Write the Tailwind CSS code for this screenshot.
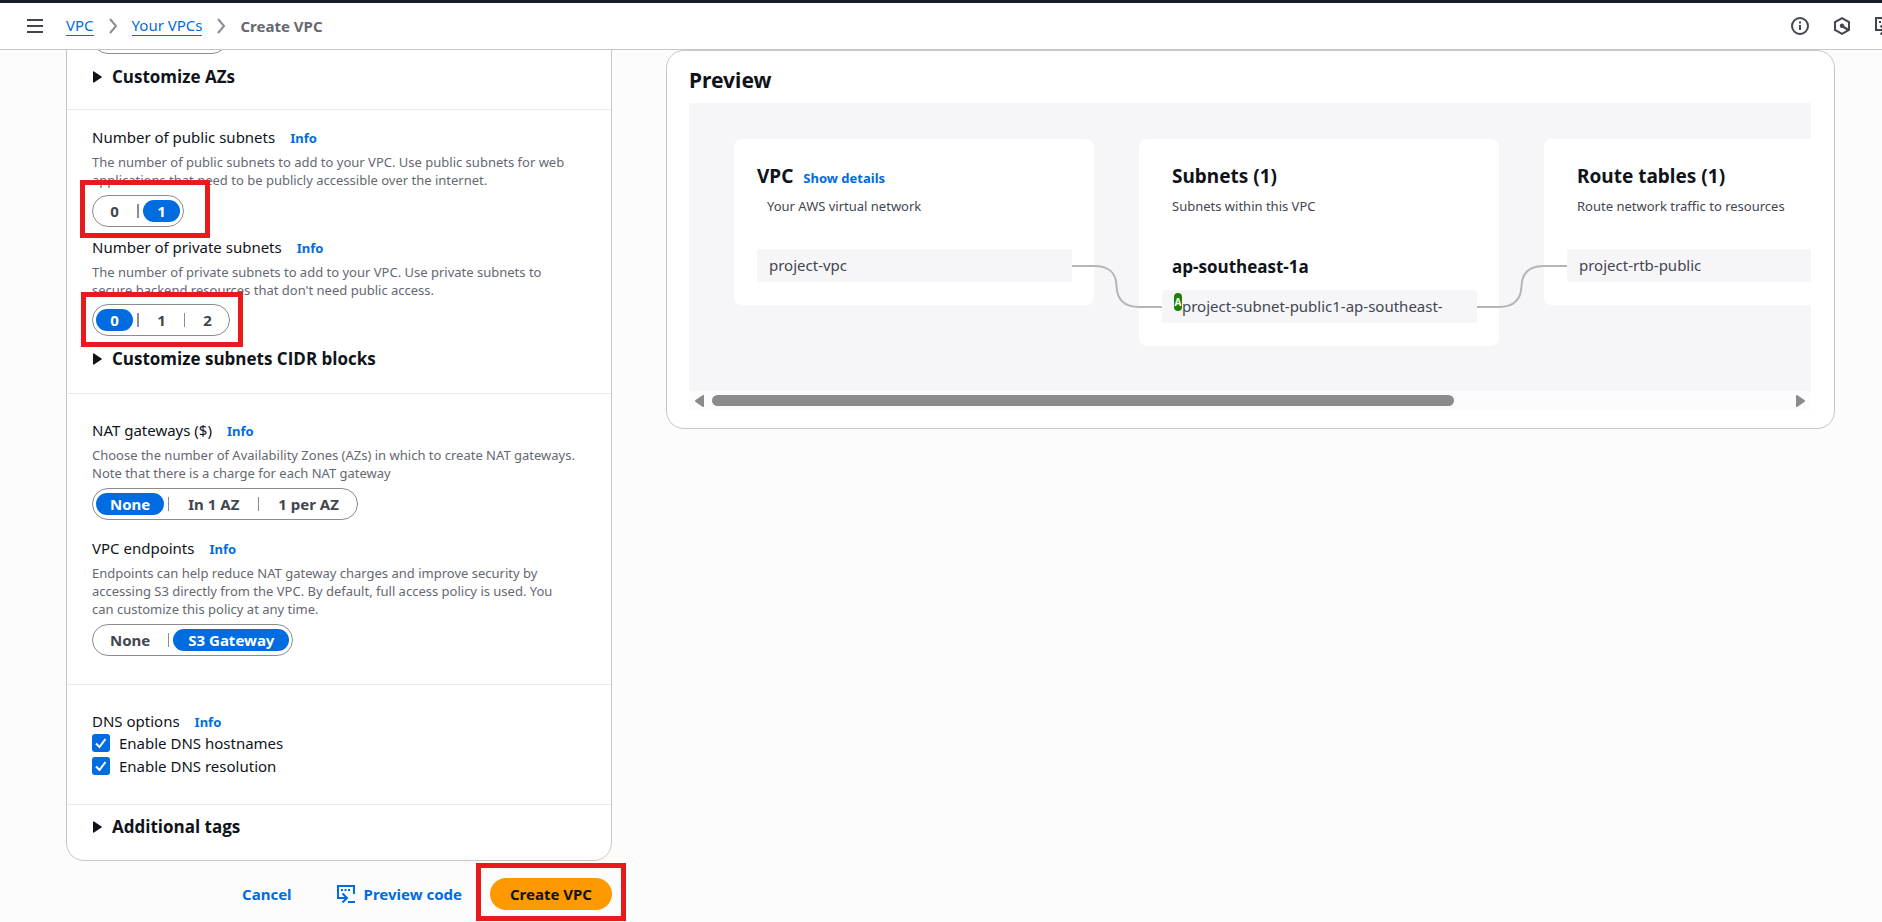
<!DOCTYPE html>
<html lang="en">
<head>
<meta charset="utf-8">
<title>Create VPC</title>
<script src="https://cdn.jsdelivr.net/npm/@tailwindcss/browser@4"></script>
</head>
<body class="flex h-screen flex-col overflow-hidden bg-[#fcfcfd] font-['Noto_Sans','Open_Sans',sans-serif] text-[15px] leading-5 text-[#0f141a]">

<header class="relative z-10 flex h-[50px] shrink-0 items-center overflow-hidden border-t-3 border-b border-t-[#161d26] border-b-[#c6c6cd] bg-white pb-px pl-[27px]">
  <button type="button" aria-label="Open navigation" class="text-[#424650]">
    <svg class="block size-4" viewBox="0 0 16 16" stroke="currentColor" stroke-width="2" fill="none"><path d="M0 2h16M0 8h16M0 14h16"/></svg>
  </button>
  <nav aria-label="Breadcrumbs" class="ml-[23px] flex items-center gap-[13px]">
    <a href="#" class="border-b border-[#006ce0] text-[#006ce0]">VPC</a>
    <svg class="h-4 w-3" viewBox="0 0 12 16" fill="none" stroke="#8c8c94" stroke-width="2"><path d="M3 1l6 7-6 7"/></svg>
    <a href="#" class="border-b border-[#006ce0] text-[#006ce0]">Your VPCs</a>
    <svg class="h-4 w-3" viewBox="0 0 12 16" fill="none" stroke="#8c8c94" stroke-width="2"><path d="M3 1l6 7-6 7"/></svg>
    <span class="font-bold text-[#656871]">Create VPC</span>
  </nav>
  <div class="-mr-[11px] ml-auto flex items-center gap-6 text-[#424650]">
    <button type="button" aria-label="Info"><svg class="block size-[18px]" viewBox="0 0 18 18" fill="none" stroke="currentColor" stroke-width="2"><circle cx="9" cy="9" r="8"/><path d="M9 8v5M9 4.500v2"/></svg></button>
    <button type="button" aria-label="Amazon Q"><svg class="block size-[18px]" viewBox="0 0 18 18" fill="none" stroke="currentColor" stroke-width="2"><path d="M9 1.200l7 3.900v7.800l-7 3.900-7-3.900V5.100z"/><path d="M9 9l6.500 4" stroke-width="2.400"/><circle cx="9" cy="8.800" r="2.200" fill="currentColor" stroke="none"/></svg></button>
    <button type="button" aria-label="CloudShell"><svg class="block size-[18px]" viewBox="0 0 18 18" fill="none" stroke="currentColor" stroke-width="2"><path d="M10 13H1V1h16v8"/><path d="M4 5h2M7.500 5h2M11 5h2M5.500 8.500L10 13l-4.500 4.500M11 17h7"/></svg></button>
  </div>
</header>

<main class="flex min-h-0 flex-1 items-start gap-[54px] overflow-hidden pr-[47px] pl-[66px]">

  <form class="-mt-10 w-[546px] shrink-0">
    <div class="rounded-[18px] border border-[#c6c6cd] bg-white">

      <section class="border-b border-[#ebebf0] px-[25px] pt-[11px] pb-[22px]">
        <div class="h-8 w-[136px] rounded-full border border-[#8c8c94]"></div>
        <button type="button" class="mt-[13px] flex h-5 items-center gap-[10px] font-['Open_Sans',sans-serif] text-[17px] font-bold">
          <svg class="ml-px h-3 w-[9px]" viewBox="0 0 9 12" fill="currentColor"><path d="M0 1q0-1 1-.5l7.500 5q.5.500 0 1l-7.500 5q-1 .5-1-.5z"/></svg>Customize AZs
        </button>
      </section>

      <section class="border-b border-[#ebebf0] px-[25px] pt-[17px] pb-6">
        <div class="flex items-baseline gap-[15px]"><h3 id="pub">Number of public subnets</h3><a href="#" class="text-[13px] font-bold text-[#006ce0]">Info</a></div>
        <p class="mt-[5px] text-[13px] leading-[18px] text-[#656871]">The number of public subnets to add to your VPC. Use public subnets for web<br>applications that need to be publicly accessible over the internet.</p>
        <div class="relative mt-[6px] w-fit">
          <div role="group" aria-labelledby="pub" class="flex h-8 items-center rounded-full border border-[#8c8c94] px-[3px] font-bold text-[#424650]">
            <button type="button" class="h-[22px] w-[37px]">0</button>
            <span class="mx-1 h-[14px] w-[2px] bg-[#8c8c94]"></span>
            <button type="button" class="h-[22px] w-[37px] rounded-full bg-[#006ce0] text-white">1</button>
          </div>
          <div class="absolute -top-[15px] -left-3 h-[58px] w-[130px] border-5 border-[#e81a1c]"></div>
        </div>

        <div class="mt-[10px] flex items-baseline gap-[15px]"><h3 id="priv">Number of private subnets</h3><a href="#" class="text-[13px] font-bold text-[#006ce0]">Info</a></div>
        <p class="mt-[5px] text-[13px] leading-[18px] text-[#656871]">The number of private subnets to add to your VPC. Use private subnets to<br>secure backend resources that don't need public access.</p>
        <div class="relative mt-[5px] w-fit">
          <div role="group" aria-labelledby="priv" class="flex h-8 items-center rounded-full border border-[#8c8c94] px-[3px] font-bold text-[#424650]">
            <button type="button" class="h-[22px] w-[37px] rounded-full bg-[#006ce0] text-white">0</button>
            <span class="mx-1 h-[14px] w-[2px] bg-[#8c8c94]"></span>
            <button type="button" class="h-[22px] w-[37px]">1</button>
            <span class="mx-1 h-[14px] w-px bg-[#8c8c94]"></span>
            <button type="button" class="h-[22px] w-[37px]">2</button>
          </div>
          <div class="absolute -top-3 -left-[11px] h-[55px] w-[162px] border-5 border-[#e81a1c]"></div>
        </div>
        <button type="button" class="mt-[13px] flex h-5 items-center gap-[10px] font-['Open_Sans',sans-serif] text-[17px] font-bold">
          <svg class="ml-px h-3 w-[9px]" viewBox="0 0 9 12" fill="currentColor"><path d="M0 1q0-1 1-.5l7.500 5q.5.500 0 1l-7.500 5q-1 .5-1-.5z"/></svg>Customize subnets CIDR blocks
        </button>
      </section>

      <section class="border-b border-[#ebebf0] px-[25px] pt-[26px] pb-7">
        <div class="flex items-baseline gap-[15px]"><h3 id="nat">NAT gateways ($)</h3><a href="#" class="text-[13px] font-bold text-[#006ce0]">Info</a></div>
        <p class="mt-[5px] text-[13px] leading-[18px] text-[#656871]">Choose the number of Availability Zones (AZs) in which to create NAT gateways.<br>Note that there is a charge for each NAT gateway</p>
        <div role="group" aria-labelledby="nat" class="mt-[6px] flex h-8 w-fit items-center rounded-full border border-[#8c8c94] px-[3px] font-bold text-[#424650]">
          <button type="button" class="h-[22px] rounded-full bg-[#006ce0] px-[14px] text-white">None</button>
          <span class="mx-1 h-[14px] w-px bg-[#8c8c94]"></span>
          <button type="button" class="h-[22px] px-[15px]">In 1 AZ</button>
          <span class="mx-1 h-[14px] w-px bg-[#8c8c94]"></span>
          <button type="button" class="h-[22px] px-[15px]">1 per AZ</button>
        </div>

        <div class="mt-[18px] flex items-baseline gap-[15px]"><h3 id="ep">VPC endpoints</h3><a href="#" class="text-[13px] font-bold text-[#006ce0]">Info</a></div>
        <p class="mt-[5px] text-[13px] leading-[18px] text-[#656871]">Endpoints can help reduce NAT gateway charges and improve security by<br>accessing S3 directly from the VPC. By default, full access policy is used. You<br>can customize this policy at any time.</p>
        <div role="group" aria-labelledby="ep" class="mt-[6px] flex h-8 w-fit items-center rounded-full border border-[#8c8c94] px-[3px] font-bold text-[#424650]">
          <button type="button" class="h-[22px] px-[14px]">None</button>
          <span class="mx-1 h-[14px] w-px bg-[#8c8c94]"></span>
          <button type="button" class="h-[22px] rounded-full bg-[#006ce0] px-[15px] text-white">S3 Gateway</button>
        </div>
      </section>

      <section class="border-b border-[#ebebf0] px-[25px] pt-[26px] pb-7">
        <div class="flex items-baseline gap-[15px]"><h3>DNS options</h3><a href="#" class="text-[13px] font-bold text-[#006ce0]">Info</a></div>
        <div class="mt-px flex flex-col gap-[3px]">
          <label class="flex h-5 items-center gap-[9px]"><span class="relative size-[18px]"><input type="checkbox" checked class="block size-[18px] appearance-none rounded-[3px] bg-[#006ce0]"><svg class="pointer-events-none absolute inset-0" viewBox="0 0 18 18" fill="none" stroke="#fff" stroke-width="2"><path d="M4 9.500l3.500 3.500L13.500 5"/></svg></span>Enable DNS hostnames</label>
          <label class="flex h-5 items-center gap-[9px]"><span class="relative size-[18px]"><input type="checkbox" checked class="block size-[18px] appearance-none rounded-[3px] bg-[#006ce0]"><svg class="pointer-events-none absolute inset-0" viewBox="0 0 18 18" fill="none" stroke="#fff" stroke-width="2"><path d="M4 9.500l3.500 3.500L13.500 5"/></svg></span>Enable DNS resolution</label>
        </div>
      </section>

      <section class="px-[25px] pt-3 pb-[23px]">
        <button type="button" class="flex h-5 items-center gap-[10px] font-['Open_Sans',sans-serif] text-[17px] font-bold">
          <svg class="ml-px h-3 w-[9px]" viewBox="0 0 9 12" fill="currentColor"><path d="M0 1q0-1 1-.5l7.500 5q.5.500 0 1l-7.500 5q-1 .5-1-.5z"/></svg>Additional tags
        </button>
      </section>
    </div>

    <div class="mt-[17px] flex items-center justify-end font-bold text-[#006ce0]">
      <button type="button">Cancel</button>
      <button type="button" class="ml-[45px] flex items-center gap-[9px]">
        <svg class="size-[18px]" viewBox="0 0 18 18" fill="none" stroke="currentColor" stroke-width="2"><path d="M10 13H1V1h16v8"/><path d="M4 5h2M7.500 5h2M11 5h2M5.500 8.500L10 13l-4.500 4.500M11 17h7"/></svg>Preview code
      </button>
      <div class="relative ml-7">
        <button type="submit" class="h-8 rounded-full bg-[#ff9900] px-5 text-[#0f141a]">Create VPC</button>
        <div class="absolute -inset-x-[14px] -top-[15px] -bottom-[11px] border-5 border-[#e81a1c]"></div>
      </div>
    </div>
  </form>

  <section class="min-w-0 flex-1 rounded-[18px] border border-[#c6c6cd] bg-white pt-[17px] pr-[23px] pb-[18px] pl-[22px]">
    <h2 class="text-[21px] leading-6 font-bold">Preview</h2>
    <div class="mt-[11px] h-[288px] overflow-hidden bg-[#f6f6f9] px-[45px] pt-9">
      <div class="flex w-[1170px] items-start">
        <article class="h-[166px] w-[360px] shrink-0 rounded-lg bg-white px-[23px] pt-[25px]">
          <div class="flex items-baseline gap-[10px]"><h3 class="text-[19px] leading-6 font-bold">VPC</h3><a href="#" class="text-[13px] font-bold text-[#006ce0]">Show details</a></div>
          <p class="mt-[9px] ml-[10px] text-[13px] leading-[18px] text-[#424650]">Your AWS virtual network</p>
          <div class="mt-[34px] flex h-[33px] w-[315px] items-center rounded-[2px] bg-[#f6f6f9] px-3 pb-[2px] text-[#424650]">project-vpc</div>
        </article>
        <div class="relative w-[45px] shrink-0">
          <svg class="absolute top-[110px] -left-[22px] h-[72px] w-[90px]" viewBox="0 0 90 72" fill="none" stroke="#b4b4bb" stroke-width="2"><path d="M0 17H22C38 17 44 24 44.500 37C45 50 52 58 67 58H90"/></svg>
        </div>
        <article class="w-[360px] shrink-0 rounded-lg bg-white px-[23px] pt-[25px] pb-[23px]">
          <h3 class="ml-[10px] text-[19px] leading-6 font-bold">Subnets (1)</h3>
          <p class="mt-[9px] ml-[10px] text-[13px] leading-[18px] text-[#424650]">Subnets within this VPC</p>
          <h4 class="mt-[40px] ml-[10px] font-['Open_Sans',sans-serif] text-[17px] leading-6 font-bold">ap-southeast-1a</h4>
          <div class="mt-[11px] flex h-[33px] w-[315px] items-center rounded-[2px] bg-[#f6f6f9] px-3 pb-[2px] text-[#424650]"><span class="mb-[8px] flex h-[18px] w-2 items-center justify-center rounded-[4px] bg-[#1d8102] text-[10px] font-bold text-white">A</span>project-subnet-public1-ap-southeast-</div>
        </article>
        <div class="relative w-[45px] shrink-0">
          <svg class="absolute top-[110px] -left-[22px] h-[72px] w-[90px]" viewBox="0 0 90 72" fill="none" stroke="#b4b4bb" stroke-width="2"><path d="M0 58H22C38 58 44 50 44.500 37C45 24 52 17 67 17H90"/></svg>
        </div>
        <article class="h-[166px] w-[360px] shrink-0 rounded-lg bg-white px-[23px] pt-[25px]">
          <h3 class="ml-[10px] text-[19px] leading-6 font-bold">Route tables (1)</h3>
          <p class="mt-[9px] ml-[10px] text-[13px] leading-[18px] text-[#424650]">Route network traffic to resources</p>
          <div class="mt-[34px] flex h-[33px] w-[315px] items-center rounded-[2px] bg-[#f6f6f9] px-3 pb-[2px] text-[#424650]">project-rtb-public</div>
        </article>
      </div>
    </div>
    <div class="flex h-[19px] items-center gap-2 bg-[#fcfcfc] px-[6px] text-[#8b8b8b]">
      <svg class="h-3 w-[9px]" viewBox="0 0 9 12" fill="currentColor"><path d="M9 1v10q0 1.500-1.500.8L.6 7q-1.200-1 0-2L7.500.2Q9-.5 9 1z"/></svg>
      <div class="flex-1"><div class="h-[11px] w-[69%] rounded-full bg-[#8b8b8b]"></div></div>
      <svg class="h-3 w-[9px]" viewBox="0 0 9 12" fill="currentColor"><path d="M0 1v10q0 1.500 1.500.8L8.400 7q1.200-1 0-2L1.500.2Q0-.5 0 1z"/></svg>
    </div>
  </section>
</main>
</body>
</html>
